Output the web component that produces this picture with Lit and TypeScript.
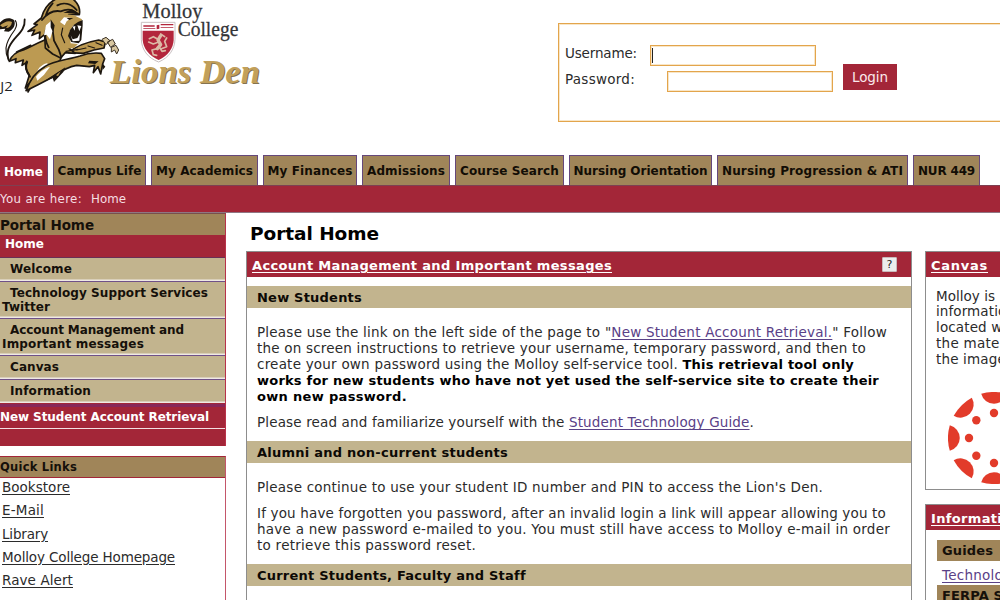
import { LitElement, html, css, svg } from "lit";
import { customElement, property } from "lit/decorators.js";

/** One line of text whose tracking is tuned so that it fills a given width. */
@customElement("text-line")
class TextLine extends LitElement {
  @property({ type: Number }) w = 0;
  static styles = css`
    :host { display: block; width: max-content; white-space: pre; }
  `;
  firstUpdated() {
    const chars = (this.textContent ?? "").length;
    if (!this.w || !chars) return;
    const natural = this.getBoundingClientRect().width;
    this.style.letterSpacing = `${(this.w - natural) / chars}px`;
  }
  render() {
    return html`<slot></slot>`;
  }
}

@customElement("site-logo")
class SiteLogo extends LitElement {
  static styles = css`
    :host { display: block; width: 270px; height: 100px; }
    svg { display: block; }
    .gold { fill: #bc9a52; }
    .edged { fill: #bc9a52; stroke: #1d1710; stroke-width: 5; stroke-linejoin: round; }
    .ink { fill: #1d1710; }
    .paper { fill: #fff; }
    .line { fill: none; stroke: #1d1710; stroke-width: 5.5; stroke-linecap: round; stroke-linejoin: round; }
    .thin { stroke-width: 3.5; }
    .claw { fill: #d8c7a0; stroke: #3a3024; stroke-width: 3; }
    .crest { fill: #b3263c; }
    .crestEdge { fill: #fff; stroke: #c9c0c2; stroke-width: 3; }
    .crestLion { fill: none; stroke: #dcb9a6; stroke-width: 10; stroke-linecap: round; stroke-linejoin: round; }
    .crestLion.small { stroke-width: 5; }
    .college { font-family: "Liberation Serif", serif; font-size: 61px; fill: #333437; stroke: #333437; stroke-width: 0.8; }
    .den { font-family: "Liberation Serif", serif; font-size: 104px; font-weight: bold; font-style: italic; fill: #c2a05a; }
    .denShade { fill: #857350; }
    .tag { font-family: "Open Sans", "Noto Sans", sans-serif; font-size: 37px; fill: #222; }
  `;
  render() {
    return html`<svg width="270" height="100" viewBox="0 0 810 300">
      <!-- tail -->
      <path class="ink" d="M-2 70 C10 54 28 50 42 60 C48 72 42 88 26 95 L12 94 L16 86 L-2 88 Z" />
      <path class="gold" d="M0 76 C12 66 26 60 36 66 C34 78 28 84 18 84 L24 76 L8 82 Z" />
      <path class="line" d="M74 58 C76 84 60 98 44 116 C26 138 18 154 26 180" />
      <path class="line thin" d="M46 62 C52 70 50 80 44 90 C32 106 20 124 18 144 C17 158 20 168 25 178" />
      <!-- back and flank -->
      <path class="edged" d="M28 184 C36 164 52 154 70 150 C88 142 106 132 134 120 L190 150 L180 182 L128 208 L106 234 L84 276 L88 250 L76 264 L88 226 C78 212 76 198 82 186 L66 196 L70 180 L46 188 L48 176 Z" />
      <path class="line" d="M50 156 L92 136 M80 184 C74 198 78 214 90 230" />
      <path class="paper" d="M108 228 C112 208 120 196 140 190 L152 196 L126 212 Z" />
      <!-- far foreleg -->
      <path class="edged" d="M206 158 C230 136 262 126 296 120 L316 126 L312 144 L282 150 L250 160 Z" />
      <path class="line thin" d="M230 150 L258 144 M264 138 L284 144 M288 128 L306 136" />
      <path class="claw" d="M306 118 L318 112 L330 122 L318 134 Z M322 126 L338 118 L346 132 L332 142 Z M334 142 L348 136 L356 150 L350 162 L344 150 L334 156 Z" />
      <!-- near foreleg -->
      <path class="edged" d="M78 272 C88 244 106 216 134 200 C162 182 200 180 240 168 C266 158 286 158 304 160 L314 176 L308 192 L302 222 L294 200 L280 218 L284 196 L268 200 L230 196 C204 200 184 212 160 230 L114 254 Z" />
      <path class="paper" d="M108 230 C120 214 132 206 150 200 L132 224 L112 242 Z" />
      <path class="ink" d="M150 232 L196 202 L190 216 L162 246 L158 234 L130 246 Z M268 182 L296 184 L286 192 L264 190 Z M306 188 L316 200 L308 210 Z" />
      <path class="gold" d="M168 226 L182 214 L174 228 Z" />
      <!-- mane -->
      <path class="edged" d="M84 94 L112 74 L102 72 L124 54 C132 24 148 6 170 -4 L218 -4 C232 8 242 24 238 44 L206 44 L196 92 L206 144 L226 160 L196 158 L182 174 L158 162 L136 144 L134 104 L118 116 L120 96 L96 106 L104 90 Z" />
      <path class="line" d="M126 60 C140 42 160 30 182 34 C200 26 220 28 234 42 M158 10 C148 20 142 32 138 44 M172 16 C190 6 212 10 230 30 M138 88 C132 112 138 128 146 142 M158 92 L162 122 L176 148 L184 172" />
      <path class="paper" d="M154 62 L158 92 L150 118 L140 104 L132 106 L138 76 Z" />
      <path class="ink" d="M190 38 L216 28 L240 44 L214 40 Z M152 58 L164 76 L160 98 L152 82 Z" />
      <!-- face -->
      <path class="gold" d="M178 50 L194 42 L222 46 L246 58 L242 74 L220 76 L208 96 L212 130 L234 132 L222 144 L202 146 L186 128 L172 94 Z" />
      <path class="paper" d="M180 66 L192 52 L214 54 L200 64 L194 76 Z" />
      <path class="ink" d="M200 54 L220 54 L208 60 Z M222 74 L234 66 L248 60 L248 76 L244 120 L236 130 L214 126 L204 108 L210 90 Z" />
      <path class="paper" d="M218 80 L226 78 L224 92 Z M232 76 L244 78 L238 94 Z M212 106 L218 118 L232 114 L240 100 L238 122 L218 124 Z" />
      <path class="line thin" d="M188 84 L184 104 L194 128 M198 154 L234 148" />
      <!-- crest -->
      <path class="crestEdge" d="M424 67 H525 V118 C524 149 506 173 476 186 C443 174 425 149 424 118 Z" />
      <path class="crest" d="M428 92 H521 V120 C520 145 504 167 476 180 C447 168 430 145 428 120 Z" />
      <path class="crest" d="M430 76 H464 V80 H430 Z M482 72 H520 V76 H482 Z M470 76 L478 74 V86 L470 88 Z M430 84 H466 V86 H430 Z M482 81 H520 V83 H482 Z" />
      <path class="crestLion" d="M482 107 L474 120 L482 134 L472 146" />
      <path class="crestLion small" d="M482 102 L494 110 M474 118 L460 110 L448 116 M476 126 L460 132 L446 126 M472 146 L456 150 L460 164 L470 166 M478 142 L486 154 L496 152 M484 146 L500 140 L494 124 L500 114" />
      <!-- wordmarks -->
      <text class="college" x="427" y="53" textLength="180" lengthAdjust="spacingAndGlyphs">Molloy</text>
      <text class="college" x="533" y="109" textLength="182" lengthAdjust="spacingAndGlyphs">College</text>
      <text class="den denShade" x="333" y="251" textLength="450" aria-hidden="true">Lions Den</text>
      <text class="den" x="330" y="248" textLength="450">Lions Den</text>
      <text class="tag" x="1" y="272" textLength="37" lengthAdjust="spacingAndGlyphs">J2</text>
    </svg>`;
  }
}

@customElement("canvas-mark")
class CanvasMark extends LitElement {
  static styles = css`
    :host { display: block; width: 92px; height: 92px; flex: none; }
    svg { display: block; fill: #e23b2a; }
  `;
  render() {
    const spokes = [0, 45, 90, 135, 180, 225, 270, 315];
    return html`<svg width="92" height="92" viewBox="-46 -46 92 92">
      ${spokes.map(
        (a) => svg`<g transform=${`rotate(${a})`}>
          <path d="M-44.2 -12.8 A46 46 0 0 0 -44.2 12.8 A13.2 13.2 0 0 0 -44.2 -12.8 Z" />
          <circle cx="-25" cy="0" r="4.2" />
        </g>`
      )}
    </svg>`;
  }
}

const tabs: [string, number, number][] = [
  ["Campus Life", 93, 84],
  ["My Academics", 107, 97],
  ["My Finances", 94, 85],
  ["Admissions", 88, 78],
  ["Course Search", 109, 99],
  ["Nursing Orientation", 143, 134],
  ["Nursing Progression & ATI", 191, 181],
  ["NUR 449", 67, 57],
];

const quickLinks: [string, number][] = [
  ["Bookstore", 68],
  ["E-Mail", 42],
  ["Library", 46],
  ["Molloy College Homepage", 173],
  ["Rave Alert", 71],
];

@customElement("app-root")
class AppRoot extends LitElement {
  static styles = css`
    :host {
      display: block; width: 1000px; height: 600px; overflow: hidden; background: #fff;
      font-family: "DejaVu Sans", Verdana, sans-serif; font-size: 13.5px; line-height: 16px; color: #2b2b2b;
    }
    * { box-sizing: border-box; }
    .header { display: flex; justify-content: space-between; height: 155px; }
    .login { width: 442px; height: 99px; margin-top: 23px; border: solid #e3a54c; border-width: 1px 0 1px 1px; box-shadow: inset 1px 1px #f8e6c8, inset 0 -1px #f8e6c8; padding: 21px 0 0 6px; }
    .row { display: flex; height: 26px; }
    .label { width: 85px; line-height: 16px; }
    .field { width: 166px; height: 21px; border: 1px solid #e3a54c; box-shadow: inset 0 0 0 1px #f8e6c8; background: #fff; padding: 2px 1px; }
    .row.second .field { margin-left: 17px; }
    .caret { width: 1px; height: 15px; background: #222; }
    .button { width: 54px; height: 26px; margin: -7px 0 0 10px; background: #a32638; color: #fbe9ec; display: flex; justify-content: center; line-height: 26px; }
    .tabs { display: flex; gap: 5px; height: 30px; font-weight: bold; font-size: 12px; line-height: 30px; color: #120d05; }
    .tab { display: flex; justify-content: center; flex: none; background: #a08559; border: 1px solid #65487c; border-bottom: 0; line-height: 30px; }
    .tab.active { width: 48px; margin-top: 1px; background: #a32638; border-color: #a32638; border-right-color: #6d4470; color: #fff; padding-right: 1px; }
    .crumbs { display: flex; gap: 9px; height: 28px; background: #a32638; border-top: 1px solid #7d4052; border-bottom: 1px solid #8f7683; color: #f6dfe3; font-size: 11.8px; line-height: 27px; }
    .columns { display: flex; height: 387px; }
    .side { width: 226px; flex: none; }
    .menu { height: 233px; border-right: 1px solid #b8324a; border-top: 1px solid #78504c; font-weight: bold; font-size: 12px; line-height: 13px; color: #15100a; }
    .menuTitle { height: 21px; background: #a08559; font-size: 13.5px; line-height: 23px; }
    .current { height: 23px; background: #a32638; color: #fff; padding-left: 5px; line-height: 19px; border-bottom: 1px solid #6a2f55; }
    .item { background: #c2b48e; border-bottom: 1px solid #6f5188; box-shadow: inset 0 -1.5px #efe9e4; }
    .item.one { height: 24px; padding: 5px 0 0 10px; }
    .item.two { height: 37px; padding: 5px 0 0 2px; line-height: 13.5px; }
    .item.two .lead { padding-left: 8px; }
    .item.last { border-bottom-color: #a32638; }
    .retrieve { height: 25px; background: #a32638; color: #fff; border-top: 3px solid #87285a; border-bottom: 1px solid #f3dfe2; line-height: 20px; }
    .filler { height: 17px; background: #a32638; }
    .quick { margin-top: 10px; height: 145px; border-right: 1px solid #c4566a; border-top: 1px solid #a32638; line-height: 23.3px; }
    .quickTitle { height: 21px; background: #a08559; border-bottom: 1px solid #a32638; font-weight: bold; font-size: 11.5px; line-height: 20px; color: #15100a; }
    .quickLinks { padding: 0 0 0 2px; margin-top: -2px; }
    .under { text-decoration: underline; text-underline-offset: 2px; }
    .main { width: 666px; flex: none; margin-left: 20px; }
    .title { height: 38px; padding: 10px 0 0 4px; color: #000; font-weight: bold; font-size: 18.5px; line-height: 22px; }
    .panel { border: 1px solid #8d8d8d; background: #fff; }
    .main .panel { height: 360px; }
    .panelTitle { display: flex; justify-content: space-between; height: 25px; padding: 0 14px 0 5px; background: #a32638; color: #fff; font-size: 13px; font-weight: bold; line-height: 28px; }
    .help { width: 15px; height: 15px; margin-top: 5px; background: #ececec; border: 1px solid #c9b9bb; border-radius: 1px; color: #222; font-size: 11px; font-weight: normal; line-height: 13px; text-align: center; }
    .section { height: 22px; padding-left: 10px; background: #c2b48e; color: #0c0905; font-size: 13px; font-weight: bold; line-height: 23px; }
    .section.first { margin-top: 9px; }
    .body { padding: 0 0 0 10px; }
    .body.a { height: 133px; padding-top: 16px; line-height: 16.1px; }
    .body.b { height: 101px; padding-top: 16.6px; line-height: 15.7px; }
    .gap { height: 10px; }
    .body.b .gap { height: 11px; }
    .link { color: #5a4187; text-decoration: underline; text-underline-offset: 2px; }
    b { color: #000; font-size: 13px; line-height: 0; }
    .aside { width: 120px; flex: none; margin: 38px 0 0 13px; }
    .canvas { height: 239px; }
    .canvasBody { padding: 11.5px 0 0 10px; line-height: 15.9px; height: 94px; }
    .mark { padding: 21px 0 0 22px; height: 118px; overflow: hidden; }
    .info { margin-top: 14px; height: 120px; }
    .info .panelTitle { line-height: 27px; }
    .infoBody { padding: 10px 0 0 11px; }
    .bar { height: 21px; padding-left: 5px; background: #a08559; color: #15100a; font-size: 13px; font-weight: bold; line-height: 22px; }
    .infoLink { height: 24px; padding-left: 5px; line-height: 28px; }
  `;

  render() {
    return html`
      <div class="header">
        <site-logo></site-logo>
        <div class="login">
          <div class="row">
            <div class="label"><text-line w="72">Username:</text-line></div>
            <div class="field"><div class="caret"></div></div>
          </div>
          <div class="row second">
            <div class="label"><text-line w="70">Password:</text-line></div>
            <div class="field"></div>
            <div class="button"><text-line w="36">Login</text-line></div>
          </div>
        </div>
      </div>

      <div class="tabs">
        <div class="tab active"><text-line w="39">Home</text-line></div>
        ${tabs.map(
          ([name, width, text]) => html`<div class="tab" style="width:${width}px"><text-line w=${text}>${name}</text-line></div>`
        )}
      </div>
      <div class="crumbs"><text-line w="82">You are here:</text-line><text-line w="35">Home</text-line></div>

      <div class="columns">
        <div class="side">
          <div class="menu">
            <div class="menuTitle"><text-line w="94">Portal Home</text-line></div>
            <div class="current"><text-line w="39">Home</text-line></div>
            <div class="item one"><text-line w="62">Welcome</text-line></div>
            <div class="item two">
              <div class="lead"><text-line w="198">Technology Support Services</text-line></div>
              <text-line w="48">Twitter</text-line>
            </div>
            <div class="item two">
              <div class="lead"><text-line w="174">Account Management and</text-line></div>
              <text-line w="142">Important messages</text-line>
            </div>
            <div class="item one"><text-line w="49">Canvas</text-line></div>
            <div class="item one last"><text-line w="81">Information</text-line></div>
            <div class="retrieve"><text-line w="209">New Student Account Retrieval</text-line></div>
            <div class="filler"></div>
          </div>
          <div class="quick">
            <div class="quickTitle"><text-line w="77">Quick Links</text-line></div>
            <div class="quickLinks">
              ${quickLinks.map(([name, w]) => html`<text-line class="under" w=${w}>${name}</text-line>`)}
            </div>
          </div>
        </div>

        <div class="main">
          <div class="title"><text-line w="129">Portal Home</text-line></div>
          <div class="panel">
            <div class="panelTitle">
              <text-line class="under" w="360">Account Management and Important messages</text-line>
              <div class="help">?</div>
            </div>
            <div class="section first"><text-line w="105">New Students</text-line></div>
            <div class="body a">
              <text-line w="630">Please use the link on the left side of the page to "<span class="link">New Student Account Retrieval.</span>" Follow</text-line>
              <text-line w="609">the on screen instructions to retrieve your username, temporary password, and then to</text-line>
              <text-line w="597">create your own password using the Molloy self-service tool. <b>This retrieval tool only</b></text-line>
              <text-line w="622"><b>works for new students who have not yet used the self-service site to create their</b></text-line>
              <text-line w="150"><b>own new password.</b></text-line>
              <div class="gap"></div>
              <text-line w="497">Please read and familiarize yourself with the <span class="link">Student Technology Guide</span>.</text-line>
            </div>
            <div class="section"><text-line w="251">Alumni and non-current students</text-line></div>
            <div class="body b">
              <text-line w="566">Please continue to use your student ID number and PIN to access the Lion's Den.</text-line>
              <div class="gap"></div>
              <text-line w="629">If you have forgotten you password, after an invalid login a link will appear allowing you to</text-line>
              <text-line w="633">have a new password e-mailed to you. You must still have access to Molloy e-mail in order</text-line>
              <text-line w="219">to retrieve this password reset.</text-line>
            </div>
            <div class="section"><text-line w="268">Current Students, Faculty and Staff</text-line></div>
          </div>
        </div>

        <div class="aside">
          <div class="panel canvas">
            <div class="panelTitle"><text-line class="under" w="57">Canvas</text-line></div>
            <div class="canvasBody">
              <text-line w="59">Molloy is</text-line>
              <text-line w="79">information</text-line>
              <text-line w="97">located within</text-line>
              <text-line w="86">the material</text-line>
              <text-line w="70">the image</text-line>
            </div>
            <div class="mark"><canvas-mark></canvas-mark></div>
          </div>
          <div class="panel info">
            <div class="panelTitle"><text-line class="under" w="90">Information</text-line></div>
            <div class="infoBody">
              <div class="bar"><text-line w="51">Guides</text-line></div>
              <div class="infoLink"><text-line class="link" w="78">Technology</text-line></div>
              <div class="bar"><text-line w="130">FERPA Statement</text-line></div>
            </div>
          </div>
        </div>
      </div>
    `;
  }
}
